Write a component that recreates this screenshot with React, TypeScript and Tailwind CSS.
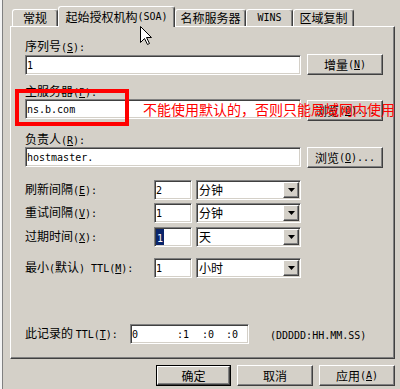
import type { ReactNode } from 'react';

const sunken =
  'border border-t-[#808080] border-l-[#808080] border-b-white border-r-white shadow-[inset_1px_1px_0_#404040,inset_-1px_-1px_0_#d4d0c8] bg-white p-[1px]';
const raised =
  'border border-t-white border-l-white border-b-[#404040] border-r-[#404040] shadow-[inset_-1px_-1px_0_#808080] bg-[#d4d0c8]';

// SimSun-like latin bits (narrow, monospaced)
const M = ({ children }: { children: ReactNode }) => (
  <span className="font-['DejaVu_Sans_Mono',monospace] text-[10px]">{children}</span>
);

const Label = ({ children, className = '' }: { children: ReactNode; className?: string }) => (
  <div className={`h-[16px] leading-[16px] ${className}`}>{children}</div>
);

const Btn = ({ children, isDefault }: { children: ReactNode; isDefault?: boolean }) =>
  isDefault ? (
    <div className="w-[75px] h-[21px] border border-black flex">
      <div className={`${raised} flex-1 flex items-center justify-center`}>{children}</div>
    </div>
  ) : (
    <div className={`${raised} w-[76px] h-[21px] flex items-center justify-center`}>{children}</div>
  );

const Field = ({ children, className = '' }: { children?: ReactNode; className?: string }) => (
  <div className={`${sunken} h-[20px] flex items-center pl-[1px] ${className}`}>{children}</div>
);

const Select = ({ value }: { value: string }) => (
  <div className={`${sunken} w-[105px] h-[20px] flex items-center`}>
    <span className="flex-1 pl-[1px] leading-[16px]">{value}</span>
    <span className={`${raised} w-[16px] h-[16px] flex items-center justify-center`}>
      <svg width="7" height="4" viewBox="0 0 7 4">
        <path d="M0 0H7L3.5 4Z" fill="#000" />
      </svg>
    </span>
  </div>
);

const IntervalRow = ({
  label,
  num,
  unit,
  selected,
  className = '',
}: {
  label: ReactNode;
  num: string;
  unit: string;
  selected?: boolean;
  className?: string;
}) => (
  <div className={`flex items-center h-[20px] ${className}`}>
    <div className="w-[129px] leading-[16px]">{label}</div>
    <Field className="w-[38px]">
      {selected ? (
        <span className="bg-[#0a246a] text-white inline-block h-[16px] leading-[16px] px-[1px]">
          <M>{num}</M>
        </span>
      ) : (
        <M>{num}</M>
      )}
    </Field>
    <div className="ml-[4px]">
      <Select value={unit} />
    </div>
  </div>
);

const Tab = ({ children, w, active }: { children: ReactNode; w: string; active?: boolean }) => (
  <div
    className={`${w} ${
      active ? 'h-[21px] -mb-[1px] relative z-10 bg-[#d4d0c8]' : 'h-[17px]'
    } border-t border-l border-r border-t-white border-l-white border-r-[#404040] rounded-t-[3px] shadow-[inset_-1px_0_0_#808080] flex items-center justify-center leading-[16px]`}
  >
    {children}
  </div>
);

export default function App() {
  return (
    <div className="w-[400px] h-[389px] bg-[#d4d0c8] relative overflow-hidden flex text-[12px] text-black font-['Noto_Sans_CJK_SC',sans-serif]">
      <div className="w-[3px] h-full bg-[#f4f4f4] border-r border-r-[#808080]" />

      <div className="ml-[7px] w-[385px] flex flex-col">
        {/* tabs */}
        <div className="mt-[6px] h-[20px] flex items-end pl-[2px]">
          <Tab w="w-[46px]">常规</Tab>
          <Tab w="w-[117px]" active>
            起始授权机构<M>(SOA)</M>
          </Tab>
          <Tab w="w-[71px]">名称服务器</Tab>
          <Tab w="w-[47px]">
            <M>WINS</M>
          </Tab>
          <Tab w="w-[61px]">区域复制</Tab>
        </div>

        {/* panel */}
        <div className="w-[385px] h-[333px] border border-t-white border-l-white border-r-[#404040] border-b-[#404040] shadow-[inset_-1px_-1px_0_#808080] pl-[14px] flex flex-col">
          <Label className="mt-[11px]">
            序列号<M>(<u>S</u>):</M>
          </Label>
          <div className="h-[21px] flex items-end gap-[6px]">
            <Field className="w-[276px]">
              <M>1</M>
            </Field>
            <Btn>
              增量<M>(<u>N</u>)</M>
            </Btn>
          </div>

          <Label className="mt-[8px]">
            主服务器<M>(<u>P</u>):</M>
          </Label>
          <div className="h-[21px] flex items-start gap-[6px]">
            <Field className="w-[276px]">
              <M>ns.b.com</M>
            </Field>
            <div className="mt-[1px]">
              <Btn>
                浏览<M>(<u>O</u>)...</M>
              </Btn>
            </div>
          </div>

          <Label className="mt-[11px]">
            负责人<M>(<u>R</u>):</M>
          </Label>
          <div className="h-[21px] flex items-start gap-[6px]">
            <Field className="w-[276px]">
              <M>hostmaster.</M>
            </Field>
            <Btn>
              浏览<M>(<u>O</u>)...</M>
            </Btn>
          </div>

          <IntervalRow
            className="mt-[12px]"
            label={
              <>
                刷新间隔<M>(<u>E</u>):</M>
              </>
            }
            num="2"
            unit="分钟"
          />
          <IntervalRow
            className="mt-[3px]"
            label={
              <>
                重试间隔<M>(<u>V</u>):</M>
              </>
            }
            num="1"
            unit="分钟"
          />
          <IntervalRow
            className="mt-[4px]"
            label={
              <>
                过期时间<M>(<u>X</u>):</M>
              </>
            }
            num="1"
            unit="天"
            selected
          />
          <IntervalRow
            className="mt-[11px]"
            label={
              <>
                最小<M>(</M>默认<M>) TTL(<u>M</u>):</M>
              </>
            }
            num="1"
            unit="小时"
          />

          <div className="mt-[46px] h-[20px] flex items-center">
            <div className="w-[105px] leading-[16px]">
              此记录的 <M>TTL(<u>T</u>):</M>
            </div>
            <Field className="w-[119px] pl-0">
              <M>
                <span className="inline-block w-[45px]">0</span>
                <span className="inline-block w-[25px]">:1</span>
                <span className="inline-block w-[24px]">:0</span>
                <span className="inline-block">:0</span>
              </M>
            </Field>
            <div className="ml-[21px]">
              <M>(DDDDD:HH.MM.SS)</M>
            </div>
          </div>
        </div>

        {/* dialog buttons */}
        <div className="mt-[6px] flex justify-end gap-[6px]">
          <Btn isDefault>确定</Btn>
          <Btn>取消</Btn>
          <Btn>
            应用<M>(<u>A</u>)</M>
          </Btn>
        </div>
      </div>

      {/* annotation overlay */}
      <div className="absolute left-[15px] top-[89px] w-[114px] h-[37px] border-[4px] border-[#ff0000] z-20" />
      <div className="absolute left-[143px] top-[99px] text-[14px] leading-[20px] text-[#ff0000] whitespace-nowrap z-20">
        不能使用默认的，否则只能局域网内使用
      </div>

      {/* mouse pointer */}
      <svg className="absolute left-[140px] top-[26px] z-30" width="13" height="20" viewBox="0 0 13 20">
        <path d="M0.5 0.5V16.5L4.5 12.5L7.5 18.5L9.5 17.5L6.5 11.5H11.5Z" fill="#fff" stroke="#000" />
      </svg>
    </div>
  );
}
